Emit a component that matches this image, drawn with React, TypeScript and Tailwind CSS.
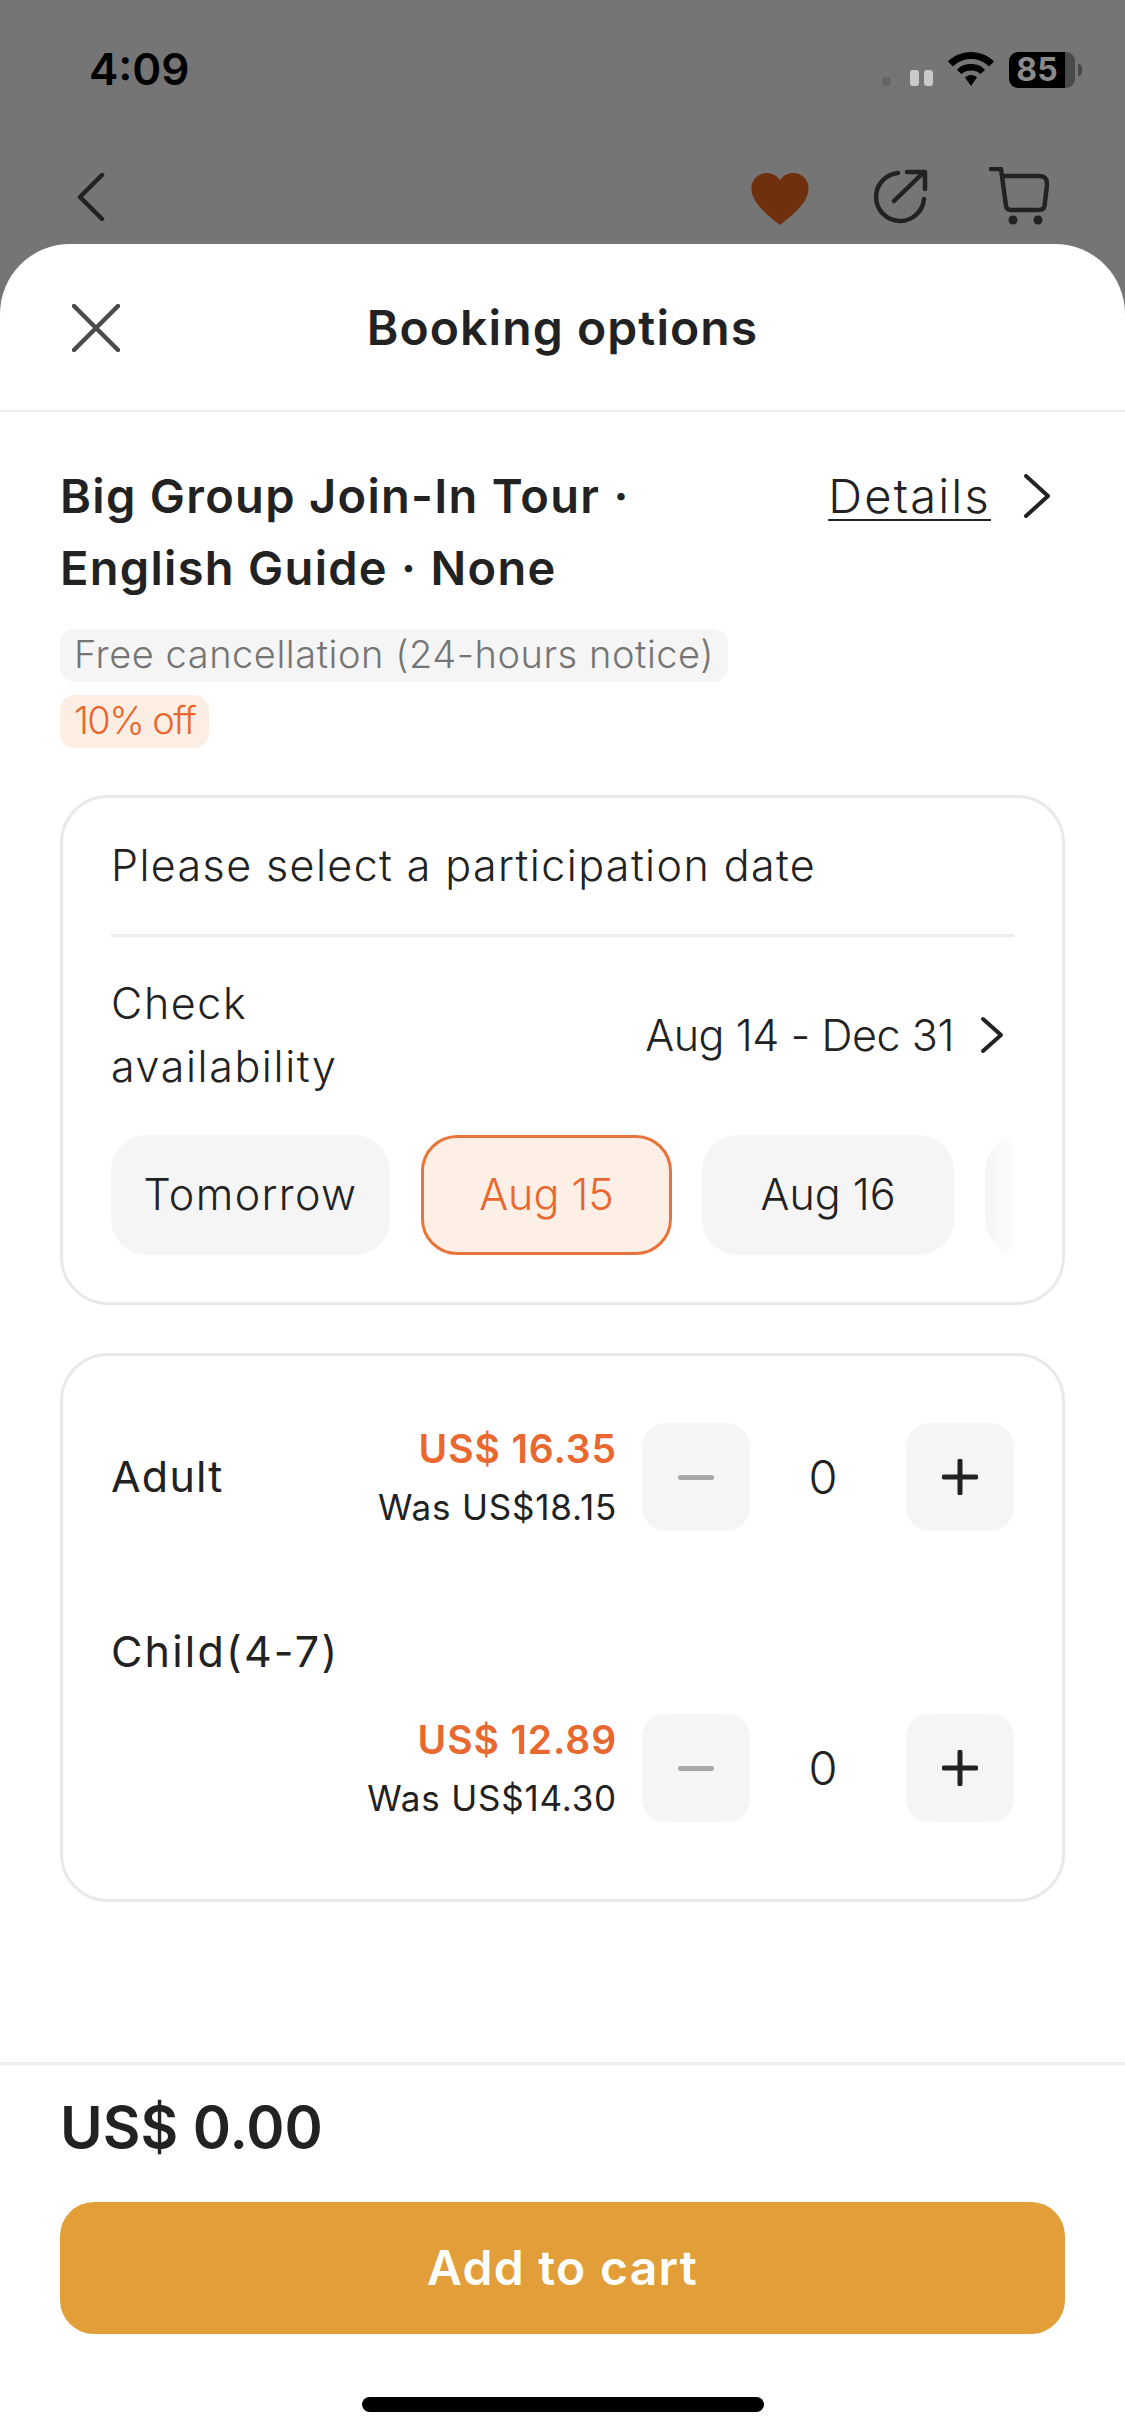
const font = "[font-family:Inter,'Liberation_Sans',sans-serif]";

function Stepper() {
  return (
    <div className="flex items-center">
      <div className="w-[108px] h-[108px] rounded-[24px] bg-[#f5f5f5] flex items-center justify-center">
        <div className="w-[36px] h-[5px] rounded-full bg-[#a8a8a8]" />
      </div>
      <div className="w-[156px] pr-[10px] text-center text-[47px] leading-[60px] font-light text-[#222222]">0</div>
      <div className="w-[108px] h-[108px] rounded-[24px] bg-[#f5f5f5] flex items-center justify-center">
        <svg viewBox="0 0 36 36" className="w-[36px] h-[36px]" fill="none">
          <path d="M18 2V34M2 18H34" stroke="#222222" strokeWidth="5" strokeLinecap="round" />
        </svg>
      </div>
    </div>
  );
}

function Price({ now, was }: { now: string; was: string }) {
  return (
    <div className="text-right mr-[25px] pt-[2px]">
      <div className="text-[39px] leading-[50px] font-semibold text-[#e8682f] tracking-[0.9px]">{now}</div>
      <div className="text-[35px] leading-[50px] mt-[8px] text-[#222222] tracking-[0.8px]">{was}</div>
    </div>
  );
}

export default function App() {
  return (
    <div className={`${font} w-[1125px] h-[2436px] bg-[#757575] flex flex-col overflow-hidden`}>
      <div className="h-[244px] flex flex-col shrink-0">
        <div className="h-[136px] pl-[89px] pr-[90px] pt-[41px] flex justify-between">
          <span className="text-[44px] leading-[56px] font-semibold text-black">4:09</span>
          <div className="flex items-start -mr-[47px] pt-[11px]">
            <div className="w-[9px] h-[9px] rounded-[3px] bg-[#666666] mt-[25px]" />
            <div className="w-[9px] h-[16px] rounded-[3px] bg-[#c9c9c9] mt-[18px] ml-[19px]" />
            <div className="w-[9px] h-[16px] rounded-[3px] bg-[#c9c9c9] mt-[18px] ml-[5px]" />
            <svg viewBox="0 0 46 34" className="w-[46px] h-[34px] ml-[15px]">
              <path d="M23 0C14 0 6 3.500 0 9.500L5 14.500C10 9.500 16 7 23 7S36 9.500 41 14.500L46 9.500C40 3.500 32 0 23 0Z" fill="#000" />
              <path d="M23 12C17 12 12 14 9 18L13.500 22C16 19.500 19.500 18.500 23 18.500S30 19.500 32.500 22L37 18C34 14 29 12 23 12Z" fill="#000" />
              <path d="M23 23C20.500 23 18.500 24 17 25.500L23 34L29 25.500C27.500 24 25.500 23 23 23Z" fill="#000" />
            </svg>
            <div className="ml-[15px] flex">
              <div className="w-[56px] h-[36px] rounded-l-[9px] bg-black text-center text-[32px] leading-[36px] font-bold text-[#8a8a8a]">85</div>
              <div className="w-[10px] h-[36px] rounded-r-[9px] bg-[#4a4a4a]" />
            </div>
            <div className="w-[4px] h-[12px] mt-[12px] ml-[3px] rounded-r-full bg-[#4a4a4a]" />
          </div>
        </div>
        <div className="flex items-start pl-[77px] pr-[76px] pt-[33px]">
          <svg viewBox="0 0 28 48" fill="none" className="w-[28px] h-[48px] mt-[4px]">
            <path d="M25 2L3 24L25 46" stroke="#222222" strokeWidth="4.500" strokeLinecap="round" strokeLinejoin="round" />
          </svg>
          <div className="flex-1" />
          <svg viewBox="0 0 56 51" className="w-[58px] h-[52px] mt-[4px]">
            <path d="M28 51C10 37 0 27 0 15C0 6 7 0 15 0C20 0 25 2.500 28 7C31 2.500 36 0 41 0C49 0 56 6 56 15C56 27 46 37 28 51Z" fill="#70300e" />
          </svg>
          <svg viewBox="0 0 56 56" fill="none" className="w-[56px] h-[56px] ml-[63px]">
            <path d="M26 4A24 24 0 1 0 52 30" stroke="#222222" strokeWidth="4.500" strokeLinecap="round" />
            <path d="M22 32L52 3M35 3H53V20" stroke="#222222" strokeWidth="4.500" strokeLinecap="round" strokeLinejoin="round" />
          </svg>
          <svg viewBox="0 0 60 58" fill="none" className="w-[60px] h-[58px] ml-[61px] -mt-[2px]">
            <path d="M2 2H12L17 39C17.500 42 19 43 22 43H50C53 43 55 42 55.500 39L58 18C58.500 11 55 9 50 9H13" stroke="#222222" strokeWidth="4.500" strokeLinecap="round" strokeLinejoin="round" />
            <circle cx="24" cy="53" r="4.500" fill="#222222" />
            <circle cx="49" cy="53" r="4.500" fill="#222222" />
          </svg>
        </div>
      </div>

      <div className="flex-1 flex flex-col bg-white rounded-t-[70px]">
        <div className="h-[168px] border-b-[2px] border-[#ececec] relative flex items-center justify-center shrink-0">
          <svg viewBox="0 0 48 48" fill="none" className="absolute left-[72px] top-[60px] w-[48px] h-[48px]">
            <path d="M2 2L46 46M46 2L2 46" stroke="#4a4a4a" strokeWidth="4.500" strokeLinecap="round" />
          </svg>
          <span className="text-[48px] leading-[60px] font-semibold text-[#222222] mt-[1px] tracking-[1.1px]">Booking options</span>
        </div>

        <div className="flex-1 px-[60px] pt-[48px]">
          <div className="flex justify-between items-start">
            <div className="text-[47px] leading-[72px] font-semibold text-[#222222] tracking-[1.3px]">
              Big Group Join-In Tour ·<br />English Guide · None
            </div>
            <div className="flex items-start">
              <span className="text-[47px] leading-[72px] text-[#222222] underline underline-offset-[6px] decoration-[2px] font-light tracking-[2.2px]">Details</span>
              <svg viewBox="0 0 28 44" fill="none" className="w-[28px] h-[44px] ml-[32px] mt-[14px] mr-[14px]">
                <path d="M3 2L25 22L3 42" stroke="#222222" strokeWidth="4" strokeLinecap="round" strokeLinejoin="round" />
              </svg>
            </div>
          </div>

          <div className="mt-[25px] flex flex-col items-start gap-[13px]">
            <span className="h-[53px] rounded-[15px] bg-[#f5f5f5] px-[14px] text-[38px] leading-[51px] font-light text-[#757575] tracking-[0.55px]">Free cancellation (24-hours notice)</span>
            <span className="h-[53px] rounded-[15px] bg-[#fdeee4] px-[14px] text-[38px] leading-[51px] font-light text-[#e8682f] tracking-[-1.6px]">10% off</span>
          </div>

          <div className="mt-[47px] h-[510px] rounded-[48px] border-[3px] border-[#e9e9e9] pl-[48px] pr-[48px] pt-[39px]">
            <div className="text-[43px] leading-[56px] pb-[41px] border-b-[3px] border-[#eeeeee] text-[#222222] font-light tracking-[1.4px]">Please select a participation date</div>
            <div className="flex items-center justify-between mt-[35px] mr-[10px]">
              <div className="text-[43px] leading-[63px] text-[#222222] font-light tracking-[1.6px]">Check<br />availability</div>
              <div className="flex items-center">
                <span className="text-[43px] leading-[56px] text-[#222222] font-light tracking-[-0.4px]">Aug 14 - Dec 31</span>
                <svg viewBox="0 0 24 38" fill="none" className="w-[24px] h-[38px] ml-[26px]">
                  <path d="M3 3L21 19L3 35" stroke="#222222" strokeWidth="4" strokeLinecap="round" strokeLinejoin="round" />
                </svg>
              </div>
            </div>
            <div className="flex gap-[31px] mt-[37px] overflow-hidden">
              <div className="w-[279px] h-[120px] pb-[2px] shrink-0 rounded-[36px] bg-[#f5f5f5] flex items-center justify-center text-[43px] text-[#222222] font-light tracking-[1.4px]">Tomorrow</div>
              <div className="w-[251px] h-[120px] pb-[2px] shrink-0 rounded-[36px] bg-[#fdefe6] border-[3px] border-[#e8743b] flex items-center justify-center text-[43px] text-[#e8682f] font-light">Aug 15</div>
              <div className="w-[252px] h-[120px] pb-[2px] -ml-[1px] shrink-0 rounded-[36px] bg-[#f5f5f5] flex items-center justify-center text-[43px] text-[#222222] font-light">Aug 16</div>
              <div className="w-[38px] h-[120px] shrink-0 rounded-l-[36px] bg-linear-to-r from-[#f5f5f5] to-white" />
            </div>
          </div>

          <div className="mt-[48px] h-[549px] rounded-[48px] border-[3px] border-[#e9e9e9] pl-[48px] pr-[48px] pt-[66px]">
            <div className="flex items-center">
              <div className="flex-1 pb-[2px] text-[43px] leading-[56px] text-[#222222] tracking-[1.2px]">Adult</div>
              <Price now="US$ 16.35" was="Was US$18.15" />
              <Stepper />
            </div>
            <div className="text-[43px] leading-[56px] text-[#222222] mt-[91px] tracking-[2.2px]">Child(4-7)</div>
            <div className="flex items-center justify-end mt-[34px]">
              <Price now="US$ 12.89" was="Was US$14.30" />
              <Stepper />
            </div>
          </div>
        </div>

        <div className="border-t-[3px] border-[#eeeeee] px-[60px] pt-[24px] shrink-0">
          <div className="text-[58px] leading-[76px] font-semibold text-[#222222]">US$ 0.00</div>
          <div className="mt-[37px] h-[132px] rounded-[34px] bg-[#e29f39] flex items-center justify-center text-[48px] font-semibold text-white tracking-[1.3px]">Add to cart</div>
          <div className="flex justify-center pt-[63px] pb-[24px]">
            <div className="w-[402px] h-[15px] rounded-full bg-black" />
          </div>
        </div>
      </div>
    </div>
  );
}
